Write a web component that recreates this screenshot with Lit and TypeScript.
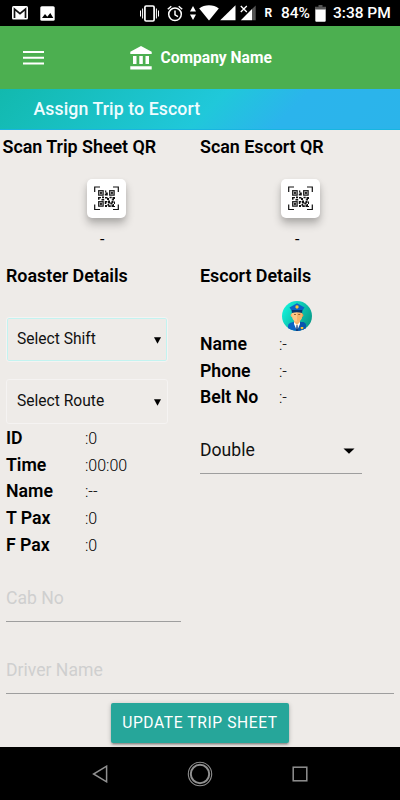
import { LitElement, html, css, svg } from "lit";
import { customElement, property } from "lit/decorators.js";

@customElement("status-bar")
class StatusBar extends LitElement {
  static styles = css`
    :host { display: flex; align-items: center; height: 26px; background: #000; color: #fff; padding: 0 9px 0 12px;
      font: 500 16px/26px Roboto, sans-serif; }
    svg { display: block; flex: none; }
    .mail { margin-right: 12px; }
    .vib { margin-left: auto; }
    .alarm { margin-left: 8px; }
    .arrows { margin-left: 6.500px; }
    .wifi { margin-left: 3px; }
    .sig { margin-left: 1.500px; }
    .sigx { margin-left: 4px; }
    .r { font-size: 12px; width: 8px; margin-left: 7.500px; line-height: 30px; font-weight: 700; }
    .pct { margin-left: 8.500px; width: 29px; line-height: 30px; font-size: 15.500px; }
    .bat { margin-left: 5px; }
    .time { margin-left: 7px; width: 58px; line-height: 30px; white-space: nowrap; font-size: 15.500px; }
  `;
  render() {
    return html`
      <svg class="mail" width="16" height="14" viewBox="0 0 16 14"><rect width="16" height="13.500" rx="1.500" fill="#fff"/><path d="M2.500 12V3L8 7.600 13.500 3V12" fill="none" stroke="#111" stroke-width="1.700"/></svg>
      <svg width="15" height="15" viewBox="0 0 15 15"><rect x=".3" y=".3" width="14.400" height="14.400" rx="1.500" fill="#fff"/><path d="M2 12 5 8l2.300 2.700L10.300 7 13.300 12Z" fill="#000"/></svg>
      <svg class="vib" width="19" height="17" viewBox="0 0 19 17" fill="none" stroke="#fff"><rect x="4.900" y="1" width="9.200" height="15" rx="1.200" stroke-width="1.700"/><path d="M2.600 3.500v10M.5 5.500v6M16.400 3.500v10M18.500 5.500v6"/></svg>
      <svg class="alarm" width="16" height="17" viewBox="0 0 16 17" fill="none" stroke="#fff" stroke-width="1.500"><circle cx="8" cy="9.300" r="6.300"/><path d="M8 5.500v4.300l3 1.800M.8 4.200 4.300 1.200M15.200 4.200 11.700 1.200"/></svg>
      <svg class="arrows" width="6" height="14" viewBox="0 0 6 14" fill="#fff"><path d="M3 0 6 5.500H0ZM3 14 0 8.500h6Z"/></svg>
      <svg class="wifi" width="20" height="16" viewBox="0 0 20 16"><path d="M10 15.500 .2 3.500C5.500-.8 14.500-.8 19.800 3.500Z" fill="#fff"/></svg>
      <svg class="sig" width="16" height="16" viewBox="0 0 16 16"><path d="M15.500 .3v15H.2Z" fill="#fff"/></svg>
      <svg class="sigx" width="17" height="16" viewBox="0 0 17 16"><path d="M12 4v11.300H.8Z" fill="#fff"/><path d="M12 4 15.700.5v14.800H12Z" fill="#555"/><path d="m.8 1 6 6m0-6-6 6" stroke="#fff" stroke-width="1.300"/></svg>
      <span class="r">R</span><span class="pct">84%</span>
      <svg class="bat" width="11" height="17" viewBox="0 0 11 17"><path d="M3.500 0h4v1.800H11V5H0V1.800h3.500Z" fill="#555"/><path d="M.3 4.500h10.400v11.200q0 1-1 1H1.300q-1 0-1-1Z" fill="#fff"/></svg>
      <span class="time">3:38 PM</span>`;
  }
}

const finder = (x: number, y: number) => svg`
  <rect x=${x + 0.6} y=${y + 0.6} width="4.600" height="4.600" fill="#aaa" stroke="#222" stroke-width="1.100"/>
  <rect x=${x + 2} y=${y + 2} width="1.900" height="1.900" fill="#222"/>`;

@customElement("qr-tile")
class QrTile extends LitElement {
  static styles = css`
    :host { display: flex; align-items: center; justify-content: center; width: 39px; height: 39px; border-radius: 5px;
      background: #fff; box-shadow: 0 6px 9px rgba(0,0,0,.24), 0 2px 5px rgba(0,0,0,.07); }
    svg { display: block; }
  `;
  render() {
    return html`<svg width="25" height="25" viewBox="0 0 25 25">
      <path d="M.7 6V1H6M19 1h5.300v5M24.300 18.500v5H19M6 23.500H.7v-5" fill="none" stroke="#111" stroke-width="1.200"/>
      ${finder(4, 4)}${finder(15, 4)}${finder(4, 15)}
      <path d="M10.800 4.500h1.500v2h1.500v3h-3V7.800h1M4 11h3v1.300H5.500v1.500H4ZM8 10.500h2v1.700H8ZM11 11h2.500v1H15v2h-2v-1.500h-2ZM15.500 10.800h2.200v1.500h-2.200ZM18.500 11H21v2h-1v1.500h-2.200v-1.200h.7ZM7.500 13h2.700v1.500H7.500ZM10.800 15h2.500v1.500h-1V18h-1.500ZM14 14.500h2v2h1.500V15h2v2h-1v1.500h-2v-1H14ZM20 15.500h1V18h-1ZM11 19h2v2h-2ZM13.500 18h1.700v1.300h1.600V21h-2.500v-1.200h-.8ZM17.500 19h1.200v-1h1.300v2h1v1h-3.500Z" fill="#111"/>
    </svg>`;
  }
}

@customElement("officer-avatar")
class OfficerAvatar extends LitElement {
  static styles = css`:host { display: block; height: 30px; } svg { display: block; }`;
  render() {
    return html`<svg width="30" height="30" viewBox="0 0 30 30">
      <defs>
        <linearGradient id="g" x1="0" y1=".2" x2="1" y2=".8"><stop offset="0" stop-color="#13f5dd"/><stop offset="1" stop-color="#079483"/></linearGradient>
        <clipPath id="c"><circle cx="15" cy="15" r="15"/></clipPath>
      </defs>
      <g clip-path="url(#c)">
        <rect width="30" height="30" fill="url(#g)"/>
        <path d="M6 30V25q0-2.500 2.500-3.200L15 20l6.500 1.800Q24 22.500 24 25v5Z" fill="#0b63c5"/>
        <path d="M15 21h6.500q2.500.8 2.500 3.200V30h-9Z" fill="#0855ad"/>
        <path d="M12 19h6v3l-3 3.500L12 22Z" fill="#f5b36d"/>
        <path d="M12 21 15 24l3-3V23L15.800 28h-1.600L12 23Z" fill="#fff"/>
        <path d="M14.500 24h1l.5 6h-2Z" fill="#123b79"/>
        <ellipse cx="9.700" cy="14.300" rx="1" ry="1.700" fill="#f5b36d"/><ellipse cx="20.300" cy="14.300" rx="1" ry="1.700" fill="#e99a50"/>
        <path d="M10 10h10v5q0 3.500-3.200 5.500h-3.600Q10 18.500 10 15Z" fill="#ffc785"/>
        <path d="M15 10h5v5q0 3.500-3.200 5.500H15Z" fill="#f7b369"/>
        <path d="M12 13.500h2m2.200 0h2" stroke="#6b3b16" stroke-width=".7"/>
        <path d="M15 2.300 22.500 6.500 20.500 9.500h-11L7.500 6.500Z" fill="#0b63c5"/>
        <path d="M9.600 9h10.800l-.3 3q-5-1.600-10.200 0Z" fill="#063571"/>
        <path d="m13.500 4.800 1.500-.6 1.500.6v1.800L15 8l-1.500-1.400Z" fill="#ffc52e"/>
        <path d="M18.700 26h2.600v1.500l-1.300 1-1.300-1Z" fill="#ffc52e"/>
      </g></svg>`;
  }
}

@customElement("detail-row")
class DetailRow extends LitElement {
  @property() label = "";
  @property() value = "";
  static styles = css`
    :host { display: grid; grid-template-columns: 79px 1fr; height: 26.700px; line-height: 26.700px; font-family: Roboto, sans-serif; color: #000; }
    .label { font-size: 17.700px; font-weight: 600; }
    .value { font-size: 16px; font-weight: 300; padding-top: 1px; }
  `;
  render() {
    return html`<span class="label">${this.label}</span><span class="value">${this.value}</span>`;
  }
}

@customElement("app-root")
class AppRoot extends LitElement {
  static styles = css`
    * { box-sizing: border-box; }
    :host { display: flex; flex-direction: column; width: 400px; height: 800px; overflow: hidden; background: #eeebe8;
      font-family: Roboto, sans-serif; color: #000; }
    svg { display: block; }
    .top { height: 63px; flex: none; background: #4caf50; color: #fff; display: flex; align-items: center; padding-left: 23px; }
    .bank { margin-left: 86px; }
    .company { margin-left: 8.500px; font-size: 15.600px; font-weight: 700; line-height: 20px; }
    .title { height: 41px; flex: none; padding-left: 33.500px; line-height: 41px; font-size: 17.700px; font-weight: 500; letter-spacing: .1px; color: #effcff;
      background: linear-gradient(135deg, #12b9ae 0%, #20c8da 52%, #2bb4ec 71%, #2bb4ea 100%); border-bottom: 1px solid #18b5e0; }
    .main { height: 617px; flex: none; }
    .scans { display: grid; grid-template-columns: 197.500px 1fr; padding-left: 2.500px; height: 134px; }
    .scan { display: flex; flex-direction: column; }
    h2, h3 { margin: 0; font-size: 17.900px; font-weight: 600; letter-spacing: -.03px; white-space: nowrap; }
    h2 { line-height: 34px; height: 34px; }
    h3 { line-height: 24px; height: 24px; }
    .tile { margin: 15px 0 0 84px; }
    .scan + .scan .tile { margin-left: 81px; }
    .dash { margin: 12px 0 0 97.500px; font-size: 16px; line-height: 20px; }
    .scan + .scan .dash { margin-left: 95px; }
    .cols { display: grid; grid-template-columns: 194px 1fr; padding-left: 6px; height: 310px; }
    .select { width: 162px; height: 45px; border: 1px solid #f5f3f2; border-radius: 3px; padding: 0 6px 1px 10px; display: flex;
      align-items: center; justify-content: space-between; font-size: 15.600px; color: #111; }
    .shift { margin: 29px 0 17px; box-shadow: inset 0 0 0 1px #c3f3f0; }
    .select svg { margin-top: 2px; }
    .rows { padding-top: 1px; }
    .avatar { margin: 13px 0 0 82px; }
    .double { width: 162px; height: 48px; margin-top: 15px; border-bottom: 1px solid #9e9e9e; display: flex; align-items: center;
      justify-content: space-between; padding-right: 7px; font-size: 17.600px; line-height: 20px; color: #111; }
    .double svg { margin-top: 3px; }
    .field { margin-left: 6px; height: 48px; line-height: 49px; font-size: 17.600px; color: #cfcfcf; border-bottom: 1px solid #9e9e9e; }
    .cab { width: 175px; }
    .driver { width: 388px; margin-top: 24px; }
    .button { width: 178px; height: 40px; margin: 9px auto 0; border-radius: 2px; background: #26a69a; color: #fff; font-size: 15.600px;
      line-height: 40px; letter-spacing: .6px; text-align: center; white-space: nowrap;
      box-shadow: 0 2px 2px rgba(0,0,0,.18), 0 3px 1px -2px rgba(0,0,0,.14), 0 1px 5px rgba(0,0,0,.2); }
    .nav { flex: 1; background: #000; display: flex; align-items: center; padding-left: 92px; }
    .home { margin-left: 79px; }
    .recent { margin-left: 79px; }
  `;
  render() {
    return html`
      <status-bar></status-bar>
      <div class="top">
        <svg width="21" height="14" viewBox="0 0 21 14" fill="#fff"><path d="M0 0h21v2H0zM0 5.800h21v2H0zM0 11.600h21v2H0z"/></svg>
        <svg class="bank" width="22" height="24" viewBox="0 0 22 24" fill="#fff"><path d="M11 0 21.700 5.800V8H.3V5.800ZM3 10h3.500v8H3ZM9.300 10h3.500v8H9.300ZM15.500 10H19v8h-3.500ZM.3 20.300h21.400v3.200H.3Z"/></svg>
        <span class="company">Company Name</span>
      </div>
      <div class="title">Assign Trip to Escort</div>
      <div class="main">
        <div class="scans">
          <div class="scan"><h2>Scan Trip Sheet QR</h2><qr-tile class="tile"></qr-tile><div class="dash">-</div></div>
          <div class="scan"><h2>Scan Escort QR</h2><qr-tile class="tile"></qr-tile><div class="dash">-</div></div>
        </div>
        <div class="cols">
          <div>
            <h3>Roaster Details</h3>
            <div class="select shift">Select Shift<svg width="7" height="7" viewBox="0 0 7 7"><path d="M0 .3h7L3.500 6.800Z"/></svg></div>
            <div class="select">Select Route<svg width="7" height="7" viewBox="0 0 7 7"><path d="M0 .3h7L3.500 6.800Z"/></svg></div>
            <div class="rows">
              <detail-row label="ID" value=":0"></detail-row>
              <detail-row label="Time" value=":00:00"></detail-row>
              <detail-row label="Name" value=":--"></detail-row>
              <detail-row label="T Pax" value=":0"></detail-row>
              <detail-row label="F Pax" value=":0"></detail-row>
            </div>
          </div>
          <div>
            <h3>Escort Details</h3>
            <officer-avatar class="avatar"></officer-avatar>
            <detail-row label="Name" value=":-"></detail-row>
            <detail-row label="Phone" value=":-"></detail-row>
            <detail-row label="Belt No" value=":-"></detail-row>
            <div class="double">Double<svg width="12" height="6" viewBox="0 0 12 6"><path d="M.5.500h11L6 5.800Z"/></svg></div>
          </div>
        </div>
        <div class="field cab">Cab No</div>
        <div class="field driver">Driver Name</div>
        <div class="button">UPDATE TRIP SHEET</div>
      </div>
      <div class="nav">
        <svg width="16" height="18" viewBox="0 0 16 18"><path d="M14.600 1.200v15.600L1.600 9Z" fill="none" stroke="#909090" stroke-width="1.500"/></svg>
        <svg class="home" width="26" height="26" viewBox="0 0 26 26" fill="none" stroke="#909090"><circle cx="13" cy="13" r="11.700" stroke-width="1.100"/><circle cx="13" cy="13" r="9.200" stroke-width="2"/></svg>
        <svg class="recent" width="16" height="16" viewBox="0 0 16 16"><rect x="1.200" y="1.200" width="13.600" height="13.600" fill="none" stroke="#909090" stroke-width="1.500"/></svg>
      </div>`;
  }
}
